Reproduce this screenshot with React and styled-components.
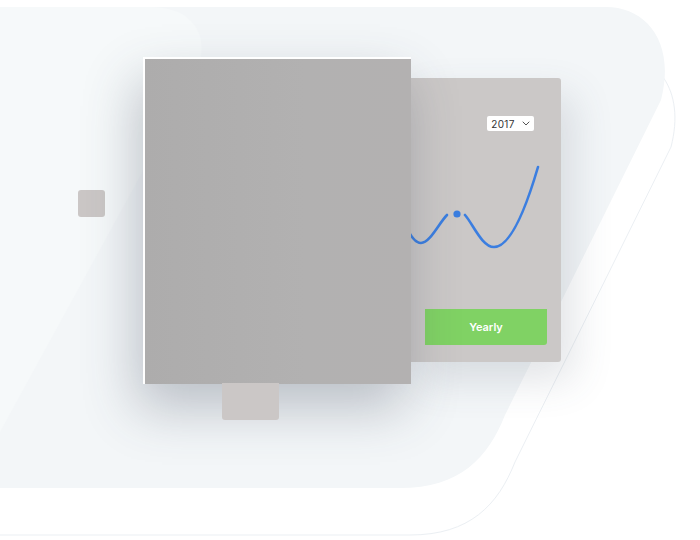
import React from 'react';
import styled, { createGlobalStyle } from 'styled-components';

const GlobalStyle = createGlobalStyle`
  html, body {
    margin: 0;
    padding: 0;
    background: #fff;
    font-family: Inter, "Open Sans", sans-serif;
  }
`;

const Scene = styled.div`
  position: relative;
  width: 700px;
  height: 540px;
  overflow: hidden;
  background: #fff;
`;

const Backdrop = styled.svg`
  position: absolute;
  top: 0;
  left: 0;
  width: 700px;
  height: 540px;
`;

const Tile = styled.div`
  position: absolute;
  left: ${p => p.$x}px;
  top: ${p => p.$y}px;
  width: ${p => p.$w}px;
  height: ${p => p.$h}px;
  background: #cbc7c6;
  border-radius: ${p => p.$radius || '3px'};
`;

const BackCard = styled.div`
  position: absolute;
  left: 409px;
  top: 78px;
  width: 152px;
  height: 284px;
  background: #cbc8c7;
  border-radius: 0 3px 3px 0;
  box-shadow: 12px 18px 40px rgba(70, 80, 100, 0.16);
  display: flex;
  flex-direction: column;
`;

const Select = styled.div`
  align-self: flex-end;
  margin: 38px 27px 0 0;
  width: 47px;
  height: 15px;
  background: #fff;
  border-radius: 2px;
  display: flex;
  align-items: center;
  justify-content: center;
  gap: 7px;
  font-size: 10px;
  font-weight: 400;
  color: #333;
  letter-spacing: 0.3px;
`;

const Chart = styled.svg`
  display: block;
  flex: 1;
  width: 152px;
  overflow: visible;
`;

const YearlyButton = styled.div`
  margin: 0 14px 17px 16px;
  height: 36px;
  background: #80d264;
  border-radius: 0 0 3px 0;
  display: flex;
  align-items: center;
  justify-content: center;
  color: #fff;
  font-size: 11px;
  font-weight: 600;
`;

const Panel = styled.div`
  position: absolute;
  left: 143px;
  top: 57px;
  width: 266px;
  height: 325px;
  background: linear-gradient(90deg, #adacac 0%, #b2b1b1 60%, #b3b1b1 100%);
  border-left: 2px solid #fff;
  border-top: 2px solid #fff;
  box-shadow: -6px 24px 50px rgba(55, 65, 85, 0.3);
`;

const Chevron = () => (
  <svg width="8" height="5" viewBox="0 0 8 5">
    <path d="M1 1 L4 4 L7 1" fill="none" stroke="#555" strokeWidth="1" strokeLinecap="round" strokeLinejoin="round" />
  </svg>
);

const blob = 'M-30 7 H606 C646 7 676 42 661 100 L505 415 C488 458 460 488 400 488 H-30 Z';

export default function App() {
  return (
    <>
      <GlobalStyle />
      <Scene>
        <Backdrop viewBox="0 0 700 540">
          <path d={blob} transform="translate(10 47)" fill="none" stroke="#ebeff3" strokeWidth="1" />
          <path d={blob} fill="#f3f6f8" />
          <path d="M0 7 H150 C192 7 212 34 196 74 L0 432 Z" fill="#f6f9fa" />
        </Backdrop>

        <Tile $x={78} $y={190} $w={27} $h={27} />

        <BackCard>
          <Select>
            2017
            <Chevron />
          </Select>
          <Chart viewBox="0 0 152 178">
            <g transform="translate(0 -53)" fill="none" stroke="#3b7ee0" strokeWidth="2.6" strokeLinecap="round">
              <path d="M-4 146 C2 160 7 165 12 165 C21 165 30 145 38 137" />
              <path d="M56 137 C64 146 73 169 85 169 C102 169 117 130 129 89" />
              <circle cx="48" cy="136" r="3.6" fill="#3b7ee0" stroke="none" />
            </g>
          </Chart>
          <YearlyButton>Yearly</YearlyButton>
        </BackCard>

        <Panel />
        <Tile $x={222} $y={383} $w={57} $h={37} $radius="0 0 3px 3px" />
      </Scene>
    </>
  );
}
